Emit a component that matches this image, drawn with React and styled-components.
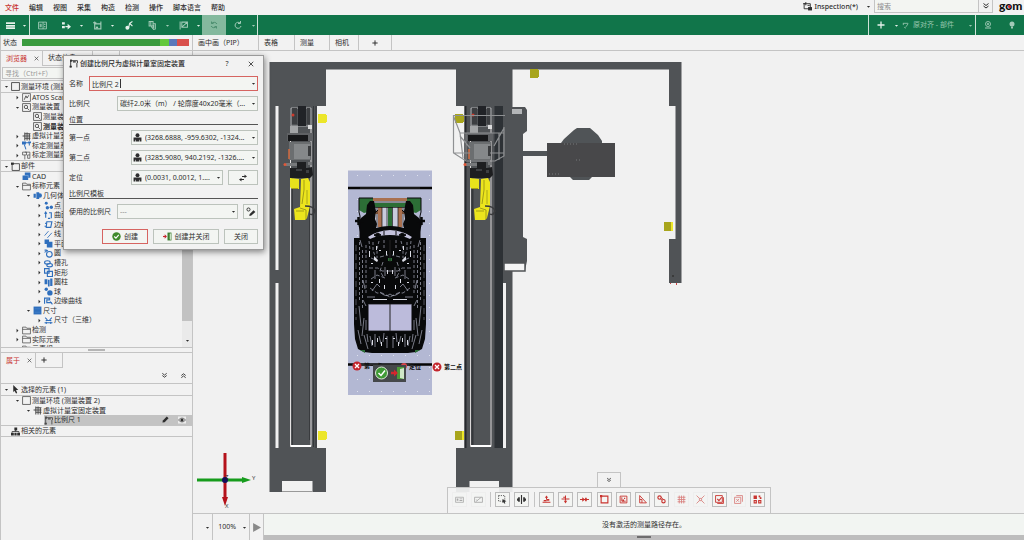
import React from "react";
import styled, { createGlobalStyle, css } from "styled-components";

const GREEN = "#11754a";
const LINE = "#c4c4c4";
const RED = "#c8332f";
const STEEL = "#505356";

const GlobalStyle = createGlobalStyle`
  *, *::before, *::after { box-sizing: border-box; }
  body {
    margin: 0;
    background: #f2f2f2;
    color: #2e2e2e;
    font: 7px/10px "Noto Sans", "Noto Sans CJK SC", sans-serif;
  }
  button, input, select { font: inherit; color: inherit; margin: 0; }
  ul { list-style: none; margin: 0; padding: 0; }
`;

/* ---------- icons ---------- */

const stroke = (d, w = 1.6) => <path d={d} fill="none" stroke="currentColor" strokeWidth={w} />;
const fill = (d) => <path d={d} fill="currentColor" />;

const ICONS = {
  caret: fill("M3 6h10l-5 6z"),
  right: fill("M5 2l6 6-6 6z"),
  cross: stroke("M2 2l12 12M14 2L2 14", 2.2),
  plus: stroke("M8 1v14M1 8h14", 2.6),
  down2: stroke("M3 3l5 4 5-4M3 8l5 4 5-4", 2),
  up2: stroke("M3 8l5-4 5 4M3 13l5-4 5 4", 2),
  menu: <>{fill("M0 2h16v3.500H0zM0 7h16v3H0zM0 11h16v3H0z")}</>,
  layout: <>{stroke("M1 2h14v12H1zM9 2v12")}{fill("M3 5h2v6H3zM6 5h1v6H6zM11 5h2v2h-2zM11 9h2v2h-2z")}</>,
  goTo: <>{fill("M0 2h5v4H0zM0 9h5v4H0zM6 9h4V5l6 5-6 5v-4H6z")}</>,
  frame: <>{stroke("M3 5h11v9H3zM3 5V1M0 3h6M14 5V1", 2)}{fill("M5 10h4v3H5z")}</>,
  probe: <>{stroke("M8 13l2-9 5-3M10 4l5 5", 2)}<circle cx="6" cy="12" r="3.500" fill="currentColor" /></>,
  grab: <>{stroke("M2 1h7v8H2zM5 1v8M9 5h4v9M6 10l4 5 4-1", 1.8)}{fill("M9 7h2v6H9z")}</>,
  flag: <>{stroke("M2 1v14M5 2h10v9H5zM5 11l10-9", 1.8)}</>,
  sync: stroke("M14 6A6.500 6 0 0 0 3 5M3 1v4h4M2 10a6.500 6 0 0 0 11 1M13 15v-4H9", 2),
  redo: stroke("M12 4a6 6 0 1 0 2 6M13 0v5H8", 2),
  align: <>{stroke("M2 3h12M3 3v4M5 12l4 2M9 11L14 4", 2)}</>,
  camera: <><circle cx="8" cy="6" r="5" fill="none" stroke="currentColor" strokeWidth="1.800" /><circle cx="8" cy="6" r="2" fill="currentColor" />{stroke("M2 14h12", 2)}</>,
  bulb: <><circle cx="8" cy="6" r="5" fill="currentColor" />{fill("M6 11h4v4H6z")}</>,
  inspect: <>{stroke("M2 3h11v9H2zM5 0v6M0 3h5M8 6h4")}{fill("M9 9h7v6H9z")}</>,
  box: stroke("M1 1h14v14H1z", 1.400),
  part: <>{stroke("M2 3h13v12H2z", 1.400)}{fill("M0 1h5v4H0z")}</>,
  sensor: <>{stroke("M1 1h14v14H1z", 1.300)}{stroke("M4 12l3-7 2 4 3-5", 1.600)}</>,
  setup: <>{stroke("M1 1h14v14H1zM9 9l4 4", 1.400)}<circle cx="7" cy="7" r="3" fill="none" stroke="currentColor" strokeWidth="1.600" /></>,
  fixture: stroke("M4 3h11M1 7h14M4 11h11M5 1v14M9 1v14M13 3v12", 1.800),
  calib: <>{fill("M0 1h7v5H0zM11 1h5v3h-5z")}{stroke("M4 3h9v5M4 6l3 9", 1.800)}</>,
  calib2: <>{stroke("M1 2h7v5H1zM5 2h9v5M5 7v8M10 7h4v6h-4z", 1.300)}</>,
  cad: <>{fill("M5 1h10v9h-4v4H1V6h4z")}<path d="M5 6h6v4" fill="none" stroke="#9cc0e8" strokeWidth="1" /></>,
  folder: stroke("M1 14V2h6l1.500 2H15v10zM1 6h14", 1.300),
  geom: <>{fill("M6 2h5v12H6zM1 5h4v7H1z")}<circle cx="12" cy="8" r="4" fill="currentColor" /></>,
  points: <><circle cx="4" cy="4" r="2.600" fill="currentColor" /><circle cx="6" cy="12" r="3" fill="currentColor" /><circle cx="13" cy="11" r="3" fill="currentColor" /></>,
  surfPts: stroke("M3 3v9M1 5l2-3 2 3M9 3h4v10M7 13h4M13 4v3", 2),
  edge: stroke("M5 3h9l-2 10H4zM2 6h3M1 11h4", 2),
  line: stroke("M1 10L8 2M6 14l8-9", 1.500),
  plane: fill("M1 1h8v4h6v10H5V9H1z"),
  circle: <><circle cx="9.500" cy="9.500" r="5" fill="none" stroke="currentColor" strokeWidth="2" />{stroke("M1 6l6-4M1 2h4", 1.800)}</>,
  slot: <><ellipse cx="6" cy="6" rx="5" ry="3" fill="none" stroke="currentColor" strokeWidth="2" /><ellipse cx="10" cy="11" rx="5" ry="3" fill="none" stroke="currentColor" strokeWidth="2" /></>,
  rect: stroke("M1 1h8v8H1zM6 6h9v9H6z", 2),
  cylinder: fill("M1 2h5v9H1zM7 3h3v12H7zM11 1h4v13h-4z"),
  sphere: <><circle cx="10.500" cy="10.500" r="4.800" fill="currentColor" /><circle cx="4" cy="4" r="3" fill="currentColor" /></>,
  curve: stroke("M1 12V2h9v3H5v5h9M11 8l4 5", 2),
  dimGroup: <>{fill("M1 1h14v14H1z")}<path d="M3 5h10M3 11h10" stroke="#4f8bd0" strokeWidth="1" /></>,
  dim: stroke("M2 3l4 4M14 3l-4 4M1 12h14M3 8h10M4 10v4M12 10v4", 1.800),
  pointer: fill("M4 0l9 9H9l2 5-2 1-3-5-2 3z"),
  scaleBar: <>{stroke("M3 15V3h12v4M14 7v8", 1.600)}{fill("M2 1h3v4H2zM7 4h5v2H7zM1 12h4v3H1z")}</>,
  related: <>{fill("M6 1h5v5H6zM0 10h5v5H0zM6 10h4v5H6zM11 10h5v5h-5z")}{stroke("M8 5v3M2 10V8h12v2", 1.400)}</>,
  pencil: fill("M1 15l1-5 9-9 4 4-9 9z"),
  eye: <><path d="M0 1h16v14H0z" fill="#ececec" />{stroke("M1 8q7-8 14 0q-7 8-14 0z", 1.200)}<circle cx="8" cy="8" r="3.200" fill="currentColor" /></>,
  person: <><circle cx="8" cy="4" r="3.500" fill="currentColor" />{fill("M1 8h14v7h-3v-3h-1v3H5v-3H4v3H1z")}</>,
  swap: <>{stroke("M6 5h7M3 11h7", 2)}{fill("M11 1l5 4-5 3zM5 8l-5 3 5 4z")}</>,
  editRing: <><circle cx="4" cy="4" r="2.500" fill="none" stroke="currentColor" strokeWidth="1.500" />{fill("M5 14l1-3 6-6 3 3-7 6z")}</>,
  okDisc: <><circle cx="8" cy="8" r="7.500" fill="#3f8a2c" /><path d="M4 8l3 3 5-6" fill="none" stroke="#fff" strokeWidth="2" /></>,
  door: <><path d="M8 1h7v14H8z" fill="#3c7d2f" /><path d="M12 3l2-1v12l-2-1z" fill="#dcefd6" /><path d="M0 8h5" stroke="#c4262e" strokeWidth="2" /><path d="M3 4l4 4-4 4z" fill="#c4262e" /></>,
  play: fill("M2 0l14 8-14 8z"),
  kbd: <>{stroke("M1 4h14v9H1z", 1.400)}{fill("M3 6h3v4H3zM8 6h5v1.500H8zM8 9h5v1.500H8z")}</>,
  strike: <>{stroke("M1 4h14v9H1zM3 12L13 4M4 8l2 2", 1.500)}</>,
  selectArea: <><path d="M1 1h11v10H1z" fill="none" stroke="currentColor" strokeWidth="1.400" strokeDasharray="2 2" />{fill("M8 7l7 4-3 1 1 3-2 0-1-2-2 1z")}</>,
  mirror: fill("M7 0h2v16H7zM2 4h3v8H2zM11 4h3v8h-3zM0 6h2v4H0zM14 6h2v4h-2z"),
  axisUp: <>{stroke("M1 13h14M8 8V3M3 10h5", 1.800)}{fill("M5 5l3-4 3 4zM8 7h5v3H8z")}</>,
  axisMid: <>{stroke("M1 7h14M8 1v9M4 4h4", 1.800)}{fill("M5 10h6l-3 5z")}</>,
  axisIn: <>{stroke("M0 8h16", 1.800)}{fill("M4 4l5 4-5 4zM9 5h3v6H9z")}</>,
  square: <>{stroke("M2 2h12v12H2z", 2)}{fill("M0 0h4v4H0z")}</>,
  corner: <>{stroke("M2 2h12v12H2zM5 4v7h7", 1.600)}{fill("M6 8h3v3H6zM9 5h2v2H9z")}</>,
  triangle: stroke("M3 1v13h12zM3 8h4v6", 1.600),
  links: <><circle cx="4.500" cy="4.500" r="3" fill="none" stroke="currentColor" strokeWidth="2" /><circle cx="11.500" cy="11" r="3" fill="none" stroke="currentColor" strokeWidth="2" />{stroke("M6 7l3 2M7 4l4 3", 1.500)}</>,
  grid: stroke("M4 1v14M8 1v14M12 1v14M1 4h14M1 8h14M1 12h14", 1.500),
  converge: stroke("M1 1l5 5M15 1l-5 5M1 15l5-5M15 15l-5-5M6 6h4v4H6z", 1.500),
  checkBox: <>{stroke("M1 1h12v12H1zM4 15h11V4", 1.600)}{stroke("M4 7l3 3 5-6", 2)}</>,
  copyX: stroke("M1 4h11v11H1zM4 1h11v11M4 7l5 5M9 7l-5 5", 1.500),
  blocks: <>{fill("M1 1h6v6H1zM10 1h3v3h-3zM12 4h3v3h-3z")}{stroke("M2 10h4v4H2zM10 10h4v4h-4z", 1.800)}</>,
};

const Svg = styled.svg`
  width: ${(p) => p.$size}px;
  height: ${(p) => p.$size}px;
  flex: none;
  display: block;
  color: ${(p) => p.$color || "inherit"};
`;
const Icon = ({ name, size = 8, color }) => (
  <Svg viewBox="0 0 16 16" $size={size} $color={color} aria-hidden="true">{ICONS[name]}</Svg>
);

const PlainButton = styled.button`
  border: 0;
  padding: 0;
  background: none;
  display: flex;
  align-items: center;
  justify-content: center;
`;

/* ---------- shell ---------- */

const Shell = styled.div`
  position: relative;
  display: flex;
  flex-direction: column;
  min-height: 100vh;
  overflow: hidden;
`;

const MenuBar = styled.header`
  display: flex;
  height: 15px;
  padding-left: 5px;
`;
const Menus = styled.nav`
  display: flex;
  flex: 1;
  gap: 10px;
  align-items: center;
`;
const MenuButton = styled(PlainButton)`
  height: 12px;
  font-weight: 500;
  color: ${(p) => (p.$active ? RED : "inherit")};
`;
const Workspace = styled(PlainButton)`
  gap: 2px;
  height: 13px;
  margin-right: 3px;
  font-weight: 500;
`;
const Spacer = styled.span`
  flex: ${(p) => (p.$w ? `0 0 ${p.$w}px` : 1)};
`;
const GlobalSearch = styled.input`
  width: 105px;
  height: 13px;
  padding: 0 2px;
  border: 1px solid ${LINE};
  border-top: 0;
  background: #f3f5f2;
  &::placeholder { color: #8d8d8d; }
`;
const Expand = styled(PlainButton)`
  width: 14px;
  height: 13px;
  border: 1px solid ${LINE};
  border-width: 0 1px 1px 0;
`;
const Logo = styled.div`
  position: relative;
  z-index: 1;
  width: 31px;
  padding-left: 6px;
  font: 900 12px/12px Lato, sans-serif;
  color: #111;
  &::after {
    content: "";
    position: absolute;
    left: 15px;
    top: 5px;
    width: 3px;
    height: 3px;
    border-radius: 50%;
    background: #d8232a;
  }
`;

const Toolbar = styled.div`
  display: flex;
  height: 20px;
  background: ${GREEN};
  color: #e6f1eb;
`;
const Tool = styled(PlainButton)`
  width: ${(p) => p.$w || 24}px;
  color: ${(p) => (p.$dim ? "#a3cbb8" : "inherit")};
  ${(p) => p.$on && css`background: #84b99e; color: #4d8f70;`}
`;
const Rule = styled.span`
  width: 1px;
  background: #cfe2d8;
`;
const Alignment = styled(PlainButton)`
  width: 75px;
  padding: 0 2px;
  gap: 4px;
  color: #97c5ae;
`;

const Main = styled.main`
  flex: 1;
  display: grid;
  grid-template-columns: 193px minmax(0, 1fr);
  min-height: 0;
`;
const Side = styled.aside`
  display: flex;
  flex-direction: column;
  min-height: 0;
  border: 1px solid ${LINE};
  border-width: 0 1px 0 1px;
`;
const StatusRow = styled.div`
  display: flex;
  align-items: center;
  gap: 5px;
  height: 16px;
  padding: 0 3px 0 2px;
  border-bottom: 1px solid ${LINE};
`;
const Meter = styled.div`
  flex: 1;
  display: flex;
  height: 7px;
  background: #3a9b3f;
  justify-content: flex-end;
`;
const MeterPart = styled.span`
  width: ${(p) => p.$w}px;
  background: ${(p) => p.$color};
`;

const Tabs = styled.div`
  display: flex;
  flex: none;
  height: ${(p) => p.$h || 15}px;
  border-bottom: ${(p) => (p.$line ? `1px solid ${LINE}` : 0)};
`;
const Tab = styled(PlainButton)`
  gap: 7px;
  width: ${(p) => p.$w}px;
  padding: 0 5px;
  justify-content: ${(p) => (p.$center ? "center" : "flex-start")};
  border-right: 1px solid ${LINE};
  border-bottom: ${(p) => (p.$line ? `1px solid ${LINE}` : 0)};
  color: ${(p) => (p.$active ? RED : "inherit")};
  white-space: nowrap;
  overflow: hidden;
`;

const FilterRow = styled.div`
  height: 15px;
  padding: 1px 3px 1px 1px;
  border-bottom: 1px solid ${LINE};
`;
const Filter = styled.input`
  width: 100%;
  height: 12px;
  padding: 0 2px;
  border: 1px solid ${LINE};
  background: #f3f5f2;
  &::placeholder { color: #9b9b9b; }
`;

const TreeArea = styled.div`
  flex: 1 1 0;
  min-height: 0;
  display: flex;
  overflow: hidden;
`;
const TreeList = styled.div`
  flex: 1;
  min-width: 0;
`;
const Group = styled.ul`
  display: grid;
  grid-auto-rows: 1fr;
  height: ${(p) => p.$h}px;
`;
const Row = styled.li`
  display: flex;
  align-items: center;
  gap: 1px;
  padding-left: ${(p) => 1 + 11 * p.$level}px;
  min-height: 0;
  white-space: nowrap;
`;
const RootRow = styled.div`
  display: flex;
  align-items: center;
  gap: 1px;
  height: 12px;
  padding-left: 1px;
  border-bottom: 1px solid ${LINE};
  border-top: ${(p) => (p.$top ? `1px solid ${LINE}` : 0)};
`;
const Twist = styled.span`
  width: 8px;
  display: flex;
  justify-content: center;
`;
const RowBody = styled.span`
  flex: 1;
  height: 10px;
  display: flex;
  align-items: center;
  gap: 1px;
  padding-right: 6px;
  background: ${(p) => (p.$selected ? "#c3c3c3" : "none")};
`;
const Label = styled.span`
  flex: 1;
  font-weight: ${(p) => (p.$strong ? 600 : 400)};
`;
const RowActions = styled.span`
  display: flex;
  gap: 9px;
`;

const ScrollTrack = styled.div`
  width: 10px;
  display: flex;
  flex-direction: column;
  align-items: center;
  background: #eaeaea;
`;
const ScrollThumb = styled.div`
  width: 10px;
  height: 240px;
  flex: none;
  background: #c2c2c2;
`;
const ScrollArrow = styled(PlainButton)`
  margin-top: auto;
  width: 10px;
  height: 13px;
`;
const Splitter = styled.div`
  height: 6px;
  flex: none;
  display: flex;
  align-items: center;
  justify-content: center;
  border: 1px solid ${LINE};
  border-width: 1px 0;
  &::after { content: ""; width: 17px; height: 2px; background: #b5b5b5; }
`;
const Depends = styled.section`
  flex: 0 0 187px;
`;
const ToolsRow = styled.div`
  display: flex;
  justify-content: flex-end;
  gap: 12px;
  height: 16px;
  padding-right: 5px;
  border-bottom: 1px solid ${LINE};
`;

/* ---------- viewport ---------- */

const Stage = styled.section`
  display: flex;
  flex-direction: column;
  min-width: 0;
`;
const Viewport = styled.div`
  position: relative;
  flex: 1;
  background: #f1f1f1;
`;
const Scene = styled.svg`
  position: absolute;
  inset: 0;
  width: 100%;
  height: 100%;
`;
const Dock = styled.div`
  position: absolute;
  left: 0;
  right: 0;
  bottom: 0;
  display: flex;
  flex-direction: column;
  align-items: center;
`;
const DockTab = styled(PlainButton)`
  width: 24px;
  height: 15px;
  border: 1px solid ${LINE};
  border-bottom: 0;
  background: #f2f2f2;
`;
const DockBar = styled.div`
  width: 324px;
  height: 26px;
  padding: 0 4px 2px;
  display: flex;
  align-items: center;
  justify-content: space-between;
  border: 1px solid ${LINE};
  border-bottom: 0;
  background: rgba(243, 243, 243, 0.93);
`;
const DockButton = styled(PlainButton)`
  width: 15px;
  height: 15px;
  border: 1px solid ${(p) => (p.$flat ? "#ececec" : "#bcbcbc")};
  background: #f4f5f3;
  color: ${(p) => p.$color};
  opacity: ${(p) => (p.$flat ? 0.6 : 1)};
`;
const DockRule = styled.span`
  width: 1px;
  height: 15px;
  background: ${LINE};
`;
const Foot = styled.footer`
  display: flex;
  height: 27px;
  border-top: 1px solid ${LINE};
`;
const FootCell = styled.div`
  display: flex;
  align-items: center;
  justify-content: flex-end;
  gap: 6px;
  width: ${(p) => p.$w}px;
  padding-right: 2px;
  border-right: 1px solid ${LINE};
`;
const Message = styled.div`
  flex: 1;
  display: flex;
  align-items: center;
  justify-content: center;
  background: #f2f5f2;
  border-bottom: 5px solid #bdbdbd;
  position: relative;
  &::after {
    content: "";
    position: absolute;
    left: 50%;
    bottom: -3px;
    width: 14px;
    height: 2px;
    margin-left: -7px;
    background: #6d6d6d;
  }
`;

/* ---------- dialog ---------- */

const Dialog = styled.form`
  position: absolute;
  left: 63px;
  top: 55px;
  width: 201px;
  padding: 0 5px 5px;
  display: flex;
  flex-direction: column;
  gap: 5px;
  background: #f2f2f2;
  border: 1px solid #9a9a9a;
  box-shadow: 1px 2px 6px rgba(0, 0, 0, 0.45);
`;
const TitleBar = styled.div`
  display: flex;
  align-items: center;
  gap: 2px;
  height: 15px;
  padding: 0 3px 0 0;
`;
const Title = styled.h1`
  flex: 1;
  margin: 0;
  font-size: 7px;
  font-weight: 500;
`;
const TitleButton = styled(PlainButton)`
  width: 8px;
  margin-left: 14px;
`;
const FormRow = styled.div`
  display: grid;
  grid-template-columns: ${(p) => p.$label}px minmax(0, 1fr) ${(p) => (p.$extra ? `${p.$extra}px` : "")};
  column-gap: ${(p) => (p.$extra ? 5 : 0)}px;
  align-items: center;
  height: 15px;
`;
const Field = styled.div`
  position: relative;
  height: 15px;
`;
const controlBox = css`
  width: 100%;
  height: 15px;
  border: 1px solid #bcc3bc;
  border-radius: 0;
  background: #f3f5f2;
  outline: none;
`;
const TextInput = styled.input`
  ${controlBox}
  padding: 0 10px 0 2px;
  border-color: #d66461;
`;
const Select = styled.select`
  ${controlBox}
  appearance: none;
  padding: 0 8px 0 ${(p) => (p.$icon ? 13 : 2)}px;
  color: ${(p) => (p.$muted ? "#8a8a8a" : "inherit")};
`;
const Overlay = styled.span`
  position: absolute;
  top: ${(p) => (p.$left ? 3 : 5)}px;
  ${(p) => (p.$left ? "left: 2px;" : "right: 2px;")}
  pointer-events: none;
`;
const TextCursor = styled.span`
  position: absolute;
  left: 31px;
  top: 3px;
  width: 1px;
  height: 9px;
  background: #333;
`;
const Section = styled.h2`
  margin: 0;
  height: 9px;
  font-size: 7px;
  line-height: 8px;
  font-weight: 400;
  border-bottom: 1px solid #555;
`;
const BoxButton = styled(PlainButton)`
  height: 15px;
  width: ${(p) => (p.$w ? `${p.$w}px` : "100%")};
  gap: 3px;
  border: 1px solid ${(p) => (p.$primary ? "#d66461" : "#bcc3bc")};
  background: #f3f5f2;
`;
const Actions = styled.div`
  display: flex;
  justify-content: flex-end;
  gap: 5px;
  padding-top: 5px;
`;

/* ---------- data ---------- */

const MENUS = ["文件", "编辑", "视图", "采集", "构造", "检测", "操作", "脚本语言", "帮助"];
const BLUE = "#2f6fbd";

const ENV_ROWS = [
  [1, "right", "sensor", "ATOS Scanbox"],
  [1, "caret", "setup", "测量装置"],
  [2, "", "setup", "测量装置 1"],
  [2, "", "setup", "测量装置 2", null, true],
  [1, "right", "fixture", "虚拟计量室固定装置"],
  [1, "right", "calib", "标定测量系列", BLUE],
  [1, "right", "calib2", "标定测量路径"],
];
const PART_ROWS = [
  [1, "", "cad", "CAD", BLUE],
  [1, "caret", "folder", "标称元素"],
  [2, "caret", "geom", "几何体", BLUE],
  [3, "right", "points", "点", BLUE],
  [3, "right", "surfPts", "曲面点", BLUE],
  [3, "right", "edge", "边缘点", BLUE],
  [3, "right", "line", "线", BLUE],
  [3, "right", "plane", "平面", BLUE],
  [3, "right", "circle", "圆", BLUE],
  [3, "right", "slot", "槽孔", BLUE],
  [3, "right", "rect", "矩形", BLUE],
  [3, "right", "cylinder", "圆柱", BLUE],
  [3, "right", "sphere", "球", BLUE],
  [3, "right", "curve", "边缘曲线", BLUE],
  [2, "caret", "dimGroup", "尺寸", BLUE],
  [3, "right", "dim", "尺寸（三维）", BLUE],
  [1, "right", "folder", "检测"],
  [1, "right", "folder", "实际元素"],
  [1, "right", "folder", "元素组"],
];

const DOCK = [
  ["kbd", "#777", true], ["strike", "#777", true], null,
  ["selectArea", "#333"], ["mirror", "#333"], null,
  ["axisUp", RED], ["axisMid", RED], ["axisIn", RED], ["square", RED], ["corner", RED],
  ["triangle", RED], ["links", RED], ["grid", RED, true], ["converge", RED, true],
  ["checkBox", RED], ["copyX", RED, true], ["blocks", RED],
];

const TreeRow = ({ row: [level, twist, icon, text, color, strong], selected, children }) => (
  <Row $level={level}>
    <Twist>{twist && <Icon name={twist} size={5} />}</Twist>
    <RowBody $selected={selected}>
      <Icon name={icon} size={9} color={color || "#4a4a4a"} />
      <Label $strong={strong}>{text}</Label>
      {children}
    </RowBody>
  </Row>
);

const Combo = ({ id, value, icon, muted }) => (
  <Field>
    <Select id={id} $icon={icon} $muted={muted} defaultValue={value}>
      <option>{value}</option>
    </Select>
    {icon && <Overlay $left><Icon name={icon} size={9} /></Overlay>}
    <Overlay><Icon name="caret" size={5} /></Overlay>
  </Field>
);

/* ---------- scene drawing ---------- */

const Robot = ({ dx }) => (
  <g transform={`translate(${dx} 0)`}>
    <path d="M291 108h20v18h-20z" fill="none" stroke="#a9abad" />
    <path d="M292 108h5v16h-5zM307 108h3v16h-3z" fill="#3c3e41" />
    <path d="M298 106h8v20h-8z" fill="#212327" />
    <circle cx="293" cy="115" r="1.500" fill="#cf3a2c" />
    <path d="M290 126h8v7h-8z" fill="#a3a5a7" />
    <path d="M308 125h4v4h-4z" fill="#ddd" />
    <path d="M287 133h26v8h-26z" fill="#5f6164" />
    <path d="M288 135h20v6h-20z" fill="#17181a" />
    <path d="M289 142h22v18h-22z" fill="#6b6e70" />
    <path d="M294 144h16v15h-16z" fill="#85888a" />
    <path d="M308 146h3v10h-3z" fill="#3a3c3e" />
    <path d="M289 149v10" stroke="#d26a3f" strokeWidth="1.500" />
    <path d="M286 163h11v3h-11zM308 162h4v3h-4z" fill="#77797b" />
    <path d="M297 162h9v6h-9z" fill="#1d1e20" />
    <circle cx="285" cy="164.500" r="1.500" fill="#e0593a" />
    <path d="M290 168h17l5-1 1 8-3 3h-20z" fill="#1d1e20" />
    <path d="M296 169h6v2h-6zM306 170h3v3h-3z" fill="#3d3f42" />
    <path d="M290 178l9 1v10h-7l-2-2z" fill="#e8e21c" />
    <path d="M292 188h6v1h-6z" fill="#a39e17" />
    <path d="M301 179l7-1 2 4v24l-3 12-2 2h-10l-1-11 6-2z" fill="#ece51d" />
    <path d="M304 180v10l-2 14M300 208l6 2v9M296 211h8" fill="none" stroke="#a39e17" />
    <path d="M307 190v14" fill="none" stroke="#c2bd1b" strokeWidth="1.500" />
    <path d="M305 206q9 0 10 5q-2 5-5 3" fill="none" stroke="#3a3b3d" strokeWidth="1.500" />
  </g>
);

const Sensor = ({ x, y, dark, bright }) => (
  <g>
    <path d={`M${x} ${y}h8v1h1v7h-1v1h-8z`} fill={dark ? "#a8a51c" : "#ece62a"} />
    {bright && <path d={`M${x + 7} ${y}h2v9h-2z`} fill="#ece62a" />}
  </g>
);

// Half of the car body wiring; the other half is its mirror image about x = 390.
const HalfBody = () => (
  <g>
    <path d="M359 198h14v4l-5 2v8l-4 1-5-3z" fill="#2c6e36" />
    <path d="M367 205l3-4h4l2 10-1 8 2 5-1 4q7-2 14-2V353H372l-8-1-6-3-3-10-1-15V238h6v-6l-2-9 3-5 5-4z" fill="#08090a" />
    <path d="M355 221h9M358.500 217v8" stroke="#08090a" strokeWidth="2.500" />
    <path d="M359 198v14l1 4v24M359 198h14M374 214l4-4" fill="none" stroke="#08090a" strokeWidth="1" />
    <path d="M368 237q8-6 22-7v5q-12 0-20 4z" fill="#c3c2dc" />
    <path d="M374 235l4-2 3 2-4 2zM384 231v4" fill="#08090a" stroke="#08090a" strokeWidth="1" />
    <g fill="none" stroke="#a9acbd" strokeWidth="0.700">
      <path d="M369 241l1 9M373 242v8l2 6M379 241l-2 8v9M384 240v8M366 245v50M362.500 250v60M359.500 242v60" strokeDasharray="3 2" />
      <path d="M356 245v75" strokeDasharray="6 3" stroke="#70737f" />
      <path d="M371 258l7 3M380 257l8-2M369 268h9l4 3h8M371 279l6-4 8 3M370 288l7 5h5l8 4M383 262l-3 9 4 7" strokeDasharray="4 2" />
      <path d="M367 297h8M363 280l2 9M363 300l3 6M359 306l2 20M364 318l-2 18M366 320v10M360 240l2 7" />
      <path d="M370 336l2 10M375 334v13M379 336l2 8M384 333l-1 9M387 336v12M364 335l4 14M358 330l3 14M367 334l1 8" />
      <path d="M372 291l5-7 3 3M385 267v9M375 270v9M380 292q6 6 10 2" />
    </g>
    <g fill="#dadce4">
      <path d="M374 256l4 4-1 2-3-2zM369 251h1v6h-1zM384 285h1v4h-1zM373 299h14v1h-14zM372 340h1v5h-1zM381 342h1v4h-1zM376 246h1v4h-1zM387 270h1v4h-1zM379 250h2v1h-2zM371 263h2v1h-2zM386 251h1v4h-1zM379 279h1v4h-1zM371 282h2v1h-2zM385 338h2v1h-2zM377 338h1v4h-1z" />
    </g>
    <path d="M388 258h2v3h-2z" fill="#2c6e36" />
    <path d="M368.500 304h21.500v27h-21.500z" fill="#bcbbdb" />
    <path d="M368.500 304h21.500M368 331h22" fill="none" stroke="#111" strokeWidth="0.800" />
    <path d="M360 350l5 3v-3z" fill="#2c6e36" />
  </g>
);

const BadPoint = ({ x, y }) => (
  <g>
    <circle cx={x} cy={y} r="4.500" fill="#c4262e" />
    <path d={`M${x - 2} ${y - 2}l4 4m0-4l-4 4`} stroke="#fff" strokeWidth="1.300" />
  </g>
);

const SceneDrawing = () => (
  <Scene viewBox="193 51 831 462" preserveAspectRatio="xMinYMin meet" fontSize="6" fontWeight="600">
    <defs>
      <pattern id="holes" x="352" y="172" width="12" height="12" patternUnits="userSpaceOnUse">
        <rect width="12" height="12" fill="#b3b8d3" />
        <rect x="5" y="3" width="1" height="1" fill="#dfe2ee" />
      </pattern>
    </defs>
    {/* gantry */}
    <path d="M269.500 62H681.500V283H669V239H675.500V106H669V69.500H512.500V106H456V69.500H326V106H269.500z" fill={STEEL} />
    <path d="M269.500 106H317V448H326V492H312.500V481H282V492H269.500z" fill={STEEL} />
    <path d="M282 491.500h31" stroke="#999" />
    <path d="M275.500 106h3v164h-3zM275.500 283h3v165h-3z" fill="#f1f1f1" />
    <path d="M290.500 126V446.500H311V126" fill="none" stroke="#e4e2e2" />
    <path d="M292.500 170V445M309.500 195V440" stroke="#393b3e" />
    <path d="M313.500 106V447M316 106V448" stroke="#34373a" />
    <path d="M291 446h20" stroke="#fff" strokeWidth="2" />
    <path d="M464.500 106H512.500V492H499V481H469.500V492H456V448H464.500z" fill={STEEL} />
    <path d="M494.500 106h8.500v342h-8.500z" fill="#2d3135" />
    <path d="M465.500 106V448" stroke="#26292c" strokeWidth="2" />
    <path d="M470.500 126V446.500H491V126" fill="none" stroke="#d9d6d6" />
    <path d="M472.500 170V445" stroke="#34373a" strokeWidth="2" />
    <path d="M471 446h20" stroke="#fff" strokeWidth="2" />
    <path d="M503 283h3v165h-3z" fill="#f1f1f1" />
    {/* carriage */}
    <path d="M503 107h22l2 3v21l-4 3v103l4 2v22l-2 9h-22z" fill={STEEL} />
    <path d="M504 263h21v8h-21z" fill="#f5f5f5" stroke={STEEL} strokeWidth="1.500" />
    <path d="M512 109h10v5h-10z" fill="#b4b6b8" />
    <path d="M522 151h26v5h-26zM561 143l3-4 10-9 3-2h13l8 7 4 6v2zM570 177h22l-3 3h-16z" fill="#505457" />
    <path d="M547 143h68v34h-68z" fill="#48484a" />
    <path d="M576 160h6M549 174h12M564 144h14" stroke="#77797b" strokeDasharray="1 2" />
    {/* sensors */}
    <Sensor x={318} y={114} /><Sensor x={318} y={431} />
    <Sensor x={455} y={114} dark /><Sensor x={455} y={431} dark bright />
    <Sensor x={530} y={69} dark /><Sensor x={664} y={222} dark bright />
    <path d="M670 283h1v1h-1zM676 283h1v2h-1z" fill="#c44" />
    <circle cx="673" cy="276" r="1" fill="#333" />
    <Robot dx={0} />
    <Robot dx={180} />
    <g fill="none" stroke="#8f9193" strokeWidth="1.200">
      <path d="M505 115.500H453.500V153L466 161H495L504 156V127M453.500 116L460 133H504M460 133L463 158M460 136L470 148M504 128L494 146M466 133V160M499 133V160M453.500 153H470M490 153H504" />
    </g>
    {/* measuring table */}
    <path d="M348 170.500h84v224.500h-84z" fill="url(#holes)" />
    <path d="M348 188h84M348 364.500h84" stroke="#050505" strokeWidth="2.600" />
    <path d="M360 188h60M352 364.500h60" stroke="#444" strokeWidth="0.600" />
    <path d="M372 199h36v34h-36z" fill="#c9cbdd" />
    <path d="M373 198h34v3h-34zM378 207h4v20h-4zM398 207h4v20h-4zM374 211h4v3h-4zM402 211h4v3h-4z" fill="#a9704f" />
    <path d="M365 203h50v4h-50zM388 206h4v21h-4z" fill="#2c6e36" />
    <path d="M377 207v20M382 207v20M387 207v20M392.500 207v20M398 207v20M403 207v20M372 202h36M368 207.500h44" stroke="#111" strokeWidth="0.700" />
    <HalfBody />
    <g transform="translate(780 0) scale(-1 1)"><HalfBody /></g>
    <path d="M372 230q18-5 36 0" fill="none" stroke="#08090a" strokeWidth="2" />
    <path d="M390 240v22M390 304v27" stroke="#222" />
    <BadPoint x={357} y={366} />
    <BadPoint x={437} y={367} />
    <text x="364" y="368" fill="#111">第一点</text>
    <circle cx="404" cy="366" r="3" fill="#d9464a" />
    <text x="409" y="369" fill="#111">定位</text>
    <text x="444" y="369" fill="#111">第二点</text>
    <path d="M373 365h33v17h-33z" fill="#45484a" />
    <circle cx="381.500" cy="373" r="6" fill="#3f9a35" stroke="#dfe9dc" />
    <path d="M378.500 373l2.500 2.500 4-5" fill="none" stroke="#fff" strokeWidth="1.500" />
    <path d="M397 367h7v12h-7z" fill="#4b9a38" />
    <path d="M400 369l4-1v11l-4-1z" fill="#cfe6c7" />
    <path d="M391 373h4" fill="none" stroke="#d3262e" strokeWidth="2.500" />
    <path d="M394 369.500l4 3.500-4 3.500z" fill="#d3262e" />
    {/* axis triad */}
    <path d="M225 453v45" stroke="#b5121b" strokeWidth="3" />
    <path d="M222 497h6l-3 9z" fill="#b5121b" />
    <path d="M197 480h46" stroke="#169c1c" strokeWidth="3" />
    <path d="M242 477l9 3-9 3z" fill="#169c1c" />
    <circle cx="225" cy="480" r="3" fill="#12125e" />
    <text x="252" y="480" fill="#444" fontWeight="400">Y</text>
    <text x="225" y="508" fill="#444" fontWeight="400">X</text>
    <text x="225" y="479" fill="#222" fontWeight="400">Z</text>
  </Scene>
);

/* ---------- page ---------- */

const CreateDialog = () => (
  <Dialog role="dialog" aria-labelledby="dlg-title" onSubmit={(e) => e.preventDefault()}>
    <TitleBar>
      <Icon name="scaleBar" size={9} />
      <Title id="dlg-title">创建比例尺为虚拟计量室固定装置</Title>
      <TitleButton type="button">?</TitleButton>
      <TitleButton type="button" aria-label="关闭"><Icon name="cross" size={6} /></TitleButton>
    </TitleBar>
    <FormRow $label={20}>
      <label htmlFor="name">名称</label>
      <Field>
        <TextInput id="name" defaultValue="比例尺 2" />
        <TextCursor />
        <Overlay><Icon name="caret" size={5} /></Overlay>
      </Field>
    </FormRow>
    <FormRow $label={48}>
      <label htmlFor="bar">比例尺</label>
      <Combo id="bar" value="碳纤2.0米（m） / 轮廓度40x20毫米（..." />
    </FormRow>
    <Section>位置</Section>
    <FormRow $label={62}>
      <label htmlFor="p1">第一点</label>
      <Combo id="p1" icon="person" value="(3268.6888, -959.6302, -1324..." />
    </FormRow>
    <FormRow $label={62}>
      <label htmlFor="p2">第二点</label>
      <Combo id="p2" icon="person" value="(3285.9080, 940.2192, -1326...." />
    </FormRow>
    <FormRow $label={57} $extra={30}>
      <label htmlFor="dir">定位</label>
      <Combo id="dir" icon="person" value="(0.0031, 0.0012, 1...." />
      <BoxButton type="button" aria-label="反向"><Icon name="swap" /></BoxButton>
    </FormRow>
    <Section>比例尺模板</Section>
    <FormRow $label={43} $extra={15}>
      <label htmlFor="tpl">使用的比例尺</label>
      <Combo id="tpl" muted value="---" />
      <BoxButton type="button" aria-label="编辑"><Icon name="editRing" size={10} /></BoxButton>
    </FormRow>
    <Actions>
      <BoxButton type="submit" $w={46} $primary><Icon name="okDisc" size={9} />创建</BoxButton>
      <BoxButton type="button" $w={66}><Icon name="door" size={9} />创建并关闭</BoxButton>
      <BoxButton type="button" $w={34}>关闭</BoxButton>
    </Actions>
  </Dialog>
);

export default function App() {
  return (
    <Shell>
      <GlobalStyle />
      <MenuBar>
        <Menus>
          {MENUS.map((m, i) => <MenuButton key={m} $active={i === 0}>{m}</MenuButton>)}
        </Menus>
        <Workspace><Icon name="inspect" size={9} />Inspection(*)<Spacer $w={4} /><Icon name="caret" size={5} /></Workspace>
        <GlobalSearch placeholder="搜索" aria-label="搜索" />
        <Expand aria-label="展开"><Icon name="down2" /></Expand>
        <Logo>gom</Logo>
      </MenuBar>

      <Toolbar>
        <Tool $w={20}><Icon name="menu" size={9} /></Tool>
        <Tool $w={9}><Icon name="caret" size={5} /></Tool>
        <Rule />
        <Tool $dim><Icon name="layout" size={9} /></Tool>
        <Tool><Icon name="goTo" size={9} /></Tool>
        <Tool $w={7}><Icon name="caret" size={5} /></Tool>
        <Tool $dim><Icon name="frame" size={9} /></Tool>
        <Tool $w={7}><Icon name="caret" size={5} /></Tool>
        <Tool><Icon name="probe" size={9} /></Tool>
        <Tool $dim><Icon name="grab" size={9} /></Tool>
        <Tool $w={7} $dim><Icon name="caret" size={5} /></Tool>
        <Tool $dim><Icon name="flag" size={9} /></Tool>
        <Tool $w={7}><Icon name="caret" size={5} /></Tool>
        <Tool $on><Icon name="sync" /></Tool>
        <Tool $dim><Icon name="redo" /></Tool>
        <Tool $w={7} $dim><Icon name="caret" size={5} /></Tool>
        <Rule />
        <Spacer />
        <Rule />
        <Tool><Icon name="plus" /></Tool>
        <Tool $w={7}><Icon name="caret" size={5} /></Tool>
        <Alignment><Icon name="align" size={7} />原对齐 - 部件<Spacer /><Icon name="caret" size={5} /></Alignment>
        <Rule />
        <Tool $dim><Icon name="camera" /></Tool>
        <Tool $dim><Icon name="bulb" /></Tool>
      </Toolbar>

      <Main>
        <Side>
          <StatusRow>
            状态
            <Meter>
              <MeterPart $w={9} $color="#63c83c" />
              <MeterPart $w={8} $color="#5a78bb" />
              <MeterPart $w={12} $color="#d9504c" />
            </Meter>
          </StatusRow>
          <Tabs>
            <Tab $w={42} $active>浏览器<Icon name="cross" size={5} color="#444" /></Tab>
            <Tab $w={50} $line>状态信息</Tab>
            <Tab $w={27} $line $center><Icon name="plus" size={6} /></Tab>
          </Tabs>
          <FilterRow><Filter placeholder="寻找（Ctrl+F）" aria-label="寻找" /></FilterRow>
          <TreeArea>
            <TreeList>
              <RootRow><Twist><Icon name="caret" size={5} /></Twist><Icon name="box" size={9} /><Label>测量环境 (测量装置 2)</Label></RootRow>
              <Group $h={67}>{ENV_ROWS.map((r) => <TreeRow key={r[3]} row={r} />)}</Group>
              <RootRow $top><Twist><Icon name="caret" size={5} /></Twist><Icon name="part" size={9} /><Label>部件</Label></RootRow>
              <Group $h={182}>{PART_ROWS.map((r) => <TreeRow key={r[3]} row={r} />)}</Group>
            </TreeList>
            <ScrollTrack>
              <ScrollThumb />
              <ScrollArrow aria-label="向下滚动"><Icon name="caret" size={5} /></ScrollArrow>
            </ScrollTrack>
          </TreeArea>
          <Splitter />
          <Depends>
            <Tabs>
              <Tab $w={35} $active>属于<Icon name="cross" size={5} color="#444" /></Tab>
              <Tab $w={27} $line><Icon name="plus" size={6} /></Tab>
            </Tabs>
            <ToolsRow>
              <PlainButton aria-label="全部展开"><Icon name="down2" size={7} /></PlainButton>
              <PlainButton aria-label="全部折叠"><Icon name="up2" size={7} /></PlainButton>
            </ToolsRow>
            <RootRow><Twist><Icon name="caret" size={5} /></Twist><Icon name="pointer" size={9} /><Label>选择的元素 (1)</Label></RootRow>
            <Group $h={29}>
              <TreeRow row={[1, "caret", "box", "测量环境 (测量装置 2)"]} />
              <TreeRow row={[2, "caret", "fixture", "虚拟计量室固定装置"]} />
              <TreeRow row={[3, "", "scaleBar", "比例尺 1"]} selected>
                <RowActions><Icon name="pencil" size={7} /><Icon name="eye" /></RowActions>
              </TreeRow>
            </Group>
            <RootRow $top><Twist /><Icon name="related" size={9} /><Label>相关的元素</Label></RootRow>
          </Depends>
        </Side>

        <Stage>
          <Tabs $h={16} $line>
            <Tab $w={66}>画中画（PIP）</Tab>
            <Tab $w={36}>表格</Tab>
            <Tab $w={35}>测量</Tab>
            <Tab $w={29}>相机</Tab>
            <Tab $w={33} $center><Icon name="plus" size={6} /></Tab>
          </Tabs>
          <Viewport>
            <SceneDrawing />
            <Dock>
              <DockTab aria-label="收起"><Icon name="down2" size={6} /></DockTab>
              <DockBar>
                {DOCK.map((d, i) => d
                  ? <DockButton key={i} $color={d[1]} $flat={d[2]}><Icon name={d[0]} size={9} /></DockButton>
                  : <DockRule key={i} />)}
              </DockBar>
            </Dock>
          </Viewport>
          <Foot>
            <FootCell $w={20}><Icon name="caret" size={5} /></FootCell>
            <FootCell $w={37}>100%<Icon name="caret" size={5} /></FootCell>
            <FootCell $w={14}><Icon name="play" size={9} color="#8a8a8a" /></FootCell>
            <Message>没有激活的测量路径存在。</Message>
          </Foot>
        </Stage>
      </Main>
      <CreateDialog />
    </Shell>
  );
}
